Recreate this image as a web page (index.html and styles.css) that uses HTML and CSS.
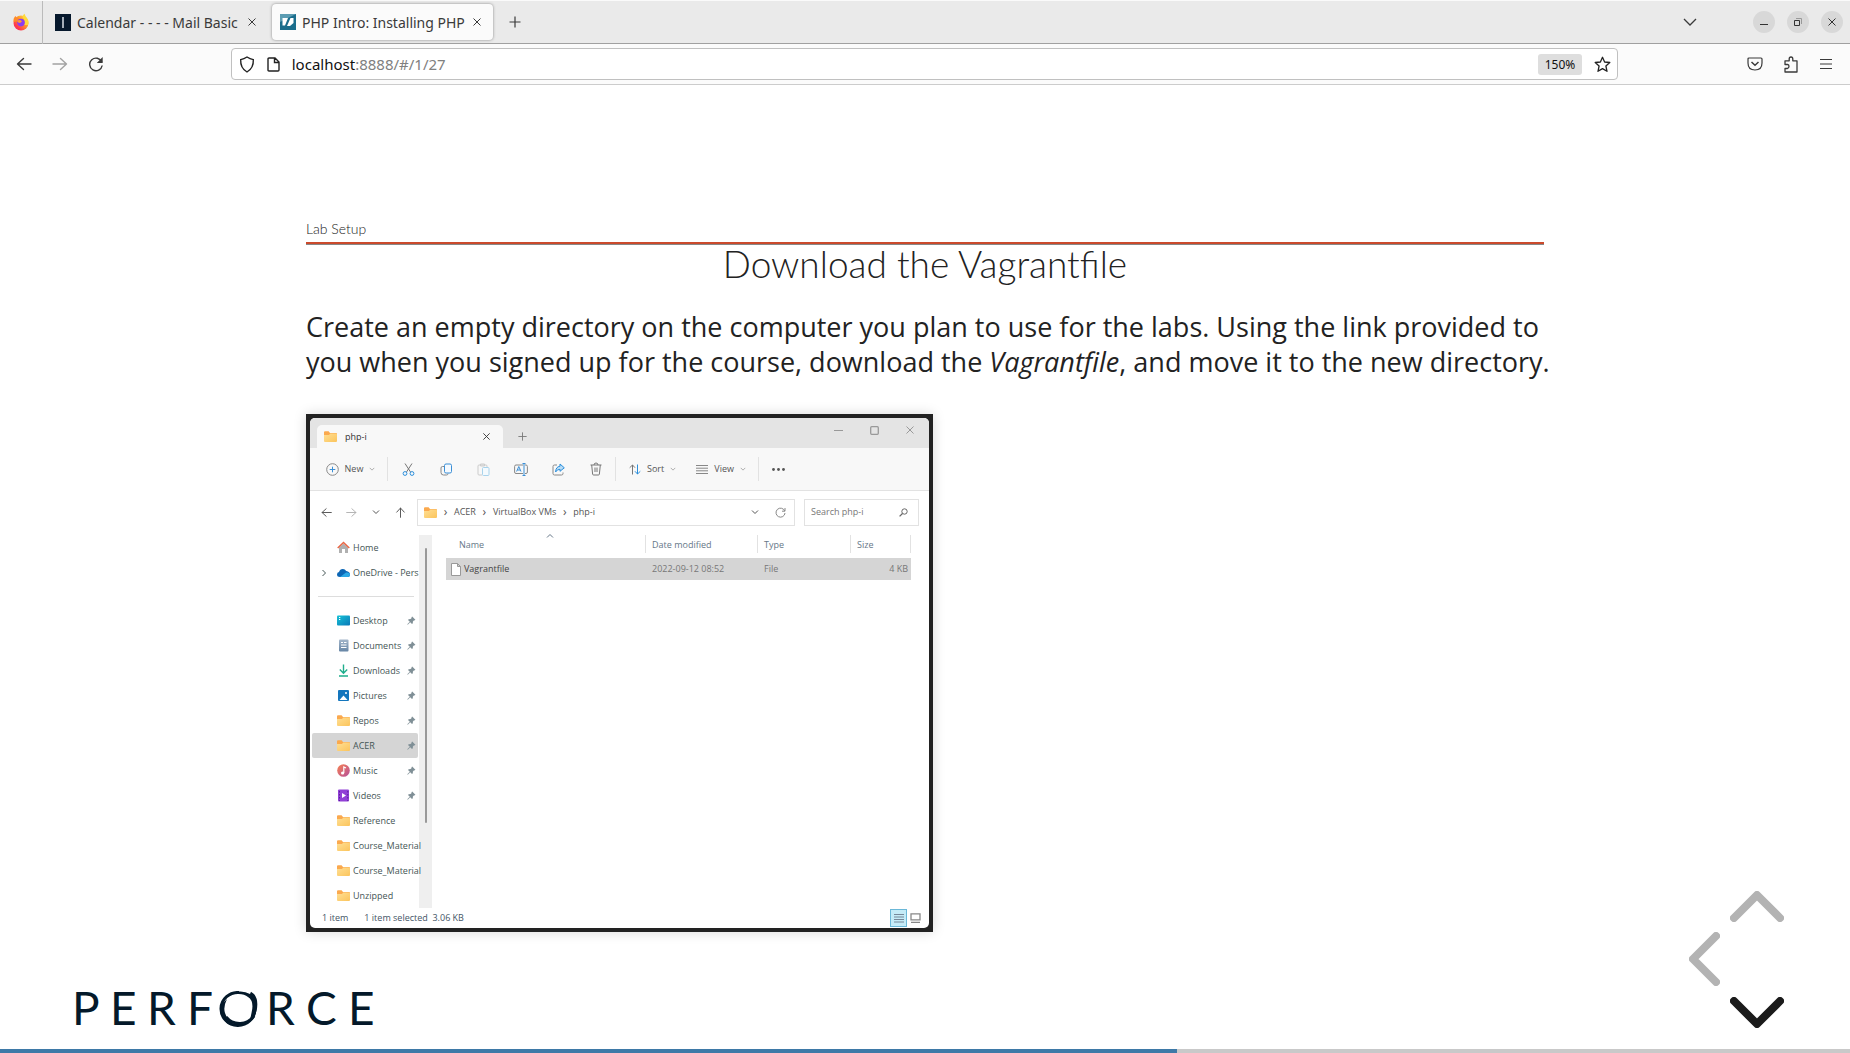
FILE: index.html
```html
<!DOCTYPE html>
<html lang="en">
<head>
<meta charset="utf-8">
<title>PHP Intro: Installing PHP</title>
<link rel="stylesheet" href="styles.css">
</head>
<body>
<svg class="defs" aria-hidden="true">
  <linearGradient id="gold" x1="0" y1="0" x2="1" y2="1"><stop offset="0" stop-color="#ffdf94"/><stop offset="1" stop-color="#fbc45c"/></linearGradient>
  <linearGradient id="cyan" x1="0" y1="0" x2="1" y2="1"><stop offset="0" stop-color="#17c3d6"/><stop offset="1" stop-color="#0a78b8"/></linearGradient>
  <linearGradient id="slate" x1="0" y1="0" x2="0" y2="1"><stop offset="0" stop-color="#a3b6ca"/><stop offset="1" stop-color="#6685a5"/></linearGradient>
  <linearGradient id="tune" x1="0" y1="0" x2="1" y2="1"><stop offset="0" stop-color="#f78151"/><stop offset="1" stop-color="#b54f9c"/></linearGradient>
  <linearGradient id="fox" x1="1" y1="0" x2="0" y2="1"><stop offset="0" stop-color="#fff04a"/><stop offset=".4" stop-color="#ff9a2a"/><stop offset=".75" stop-color="#ff3a4a"/><stop offset="1" stop-color="#f0207a"/></linearGradient>
  <symbol id="folder" viewBox="0 0 13 13"><path d="M0 2.5Q0 1.3 1 1.3H4.6L6 3H12Q13 3 13 4V8H0Z" fill="#fba94e"/><path d="M0 5H5L6.3 3.6H12Q13 3.6 13 4.6V11Q13 12 12 12H1Q0 12 0 11Z" fill="url(#gold)"/></symbol>
  <symbol id="pin" viewBox="0 0 9 9"><path d="M5.2.6 8.4 3.8 7.6 4.5 7.1 4.3 5.9 5.5 5.8 7.3 5 8 3.2 6.2 1 8.6.4 8.7.5 8 2.8 5.8 1 4 1.7 3.2 3.5 3.1 4.7 1.9 4.4 1.3Z" fill="#7f8f96"/></symbol>
  <symbol id="chev" viewBox="0 0 8 8"><path d="M1 2.5 4 5.5 7 2.5" fill="none" stroke="currentColor"/></symbol>
  <symbol id="cross" viewBox="0 0 10 10"><path d="M1.5 1.5 8.5 8.5M8.5 1.5 1.5 8.5" fill="none" stroke="currentColor"/></symbol>
  <symbol id="plus" viewBox="0 0 12 12"><path d="M6 .5V11.5M.5 6H11.5" fill="none" stroke="currentColor" stroke-width="1.2"/></symbol>
  <symbol id="back" viewBox="0 0 16 16"><path d="M15 8H1.5M7.5 2.500 1.5 8 7.5 13.500" fill="none" stroke="currentColor" stroke-width="1.4" stroke-linecap="round" stroke-linejoin="round"/></symbol>
</svg>

<header class="browser">
  <div class="tabs">
    <div class="pinned">
      <svg width="18" height="18" viewBox="0 0 18 18"><circle cx="9" cy="10" r="7.5" fill="url(#fox)"/><path d="M1.5 9Q1 5 3.5 3L5 5 7 5.2 6.5 8Z" fill="#ff8a2a"/><path d="M10.5 4Q11 1.5 12.5.8 13 3 15 5 17.5 8.5 16 12L12 12Q14 8 10.5 4" fill="#ffd93a"/><circle cx="9" cy="9.6" r="3.8" fill="#8a3df0"/><path d="M5 8Q8 6 10 8.5L8 10Q6 10 5 8" fill="#ff9c2e"/></svg>
    </div>
    <div class="tab">
      <svg width="16" height="17" viewBox="0 0 16 17"><path fill="#06182c" d="M0 0H16V17H0Z"/><path d="M8 3V14" stroke="#a4adb8" stroke-width="2"/></svg>
      <span class="tab-name">Calendar - - - - Mail Basic</span>
      <button class="plain" aria-label="Close tab"><svg width="10" height="10"><use href="#cross"/></svg></button>
    </div>
    <div class="tab tab-active">
      <svg width="16" height="16" viewBox="0 0 16 16"><path fill="#1a6d8c" d="M0 0H16V16H0Z"/><path d="M0 0H16L0 8Z" fill="#5b9cb2"/><path d="M2.500 4H8L5 11.500H2.500ZM7 12 10.500 4H13.500V9L10 12Z" fill="#fff"/></svg>
      <span class="tab-name">PHP Intro: Installing PHP</span>
      <button class="plain" aria-label="Close tab"><svg width="10" height="10"><use href="#cross"/></svg></button>
    </div>
    <button class="plain new-tab" aria-label="New tab"><svg width="12" height="12"><use href="#plus"/></svg></button>
    <div class="window-controls">
      <button class="plain list-tabs" aria-label="List all tabs"><svg width="14" height="8" viewBox="0 0 14 8"><path d="M1 1 7 7 13 1" fill="none" stroke="currentColor" stroke-width="1.3"/></svg></button>
      <button class="round" aria-label="Minimize"><svg width="10" height="10" viewBox="0 0 10 10"><path d="M1 7.5H9" stroke="currentColor"/></svg></button>
      <button class="round" aria-label="Restore"><svg width="10" height="10" viewBox="0 0 10 10"><path d="M1.5 3.5H6.5V8.5H1.5Z" fill="none" stroke="currentColor"/><path d="M3 1.5H8.5V7" fill="none" stroke="#999"/></svg></button>
      <button class="round" aria-label="Close"><svg width="10" height="10"><use href="#cross"/></svg></button>
    </div>
  </div>
  <div class="toolbar">
    <div class="history">
      <button class="plain" aria-label="Back"><svg width="16" height="16"><use href="#back"/></svg></button>
      <button class="plain faded flip" aria-label="Forward"><svg width="16" height="16"><use href="#back"/></svg></button>
      <button class="plain" aria-label="Reload"><svg width="16" height="16" viewBox="0 0 16 16"><path d="M13.8 6A6.3 6.3 0 1 0 14.2 9.5" fill="none" stroke="currentColor" stroke-width="1.4"/><path d="M14.7 1V7H8.8Z" fill="currentColor"/></svg></button>
    </div>
    <div class="address">
      <svg width="16" height="17" viewBox="0 0 16 17"><path d="M8 1Q11 3 14.3 3.6 14.8 12 8 16 1.2 12 1.7 3.6 5 3 8 1Z" fill="none" stroke="#222" stroke-width="1.4"/></svg>
      <svg width="13" height="15" viewBox="0 0 13 15"><path d="M1 2Q1 1 2 1H8L12 5V13Q12 14 11 14H2Q1 14 1 13ZM7.5 1V5.5H12" fill="none" stroke="#222" stroke-width="1.4"/></svg>
      <span class="url"><b>localhost</b>:8888/#/1/27</span>
      <button class="zoom">150%</button>
      <button class="plain" aria-label="Bookmark"><svg width="17" height="17" viewBox="0 0 17 17"><path d="M8.5 1.3 10.6 6 15.8 6.5 11.9 10 13 15.3 8.5 12.6 4 15.3 5.1 10 1.2 6.5 6.4 6Z" fill="none" stroke="#222" stroke-width="1.3" stroke-linejoin="round"/></svg></button>
    </div>
    <div class="extras">
      <button class="plain" aria-label="Save to Pocket"><svg width="16" height="16" viewBox="0 0 16 16"><path d="M1 3Q1 2 2 2H14Q15 2 15 3V7Q15 14 8 14 1 14 1 7Z" fill="none" stroke="currentColor" stroke-width="1.2"/><path d="M4.5 6 8 9.3 11.5 6" fill="none" stroke="currentColor" stroke-width="1.5"/></svg></button>
      <button class="plain" aria-label="Extensions"><svg width="16" height="17" viewBox="0 0 16 17"><path d="M2 6.5V4.8H6.2V3Q6.2 1 8 1 9.8 1 9.8 3V4.8H14V16H2V12.5H4.5Q6 12 6 10.3 6 8.7 4.5 8.5H2Z" fill="none" stroke="currentColor" stroke-width="1.3" stroke-linejoin="round"/></svg></button>
      <button class="plain" aria-label="Menu"><svg width="14" height="12" viewBox="0 0 14 12"><path d="M1 1.5H13M1 6H13M1 10.5H13" stroke="currentColor" stroke-width="1.2"/></svg></button>
    </div>
  </div>
</header>

<main class="deck">
  <section class="slide">
    <p class="chapter">Lab Setup</p>
    <h1>Download the Vagrantfile</h1>
    <p class="lead">Create an empty directory on the computer you plan to use for the labs. Using the link provided to you when you signed up for the course, download the <em>Vagrantfile</em>, and move it to the new directory.</p>

    <div class="frame">
      <div class="explorer">
        <div class="ex-title">
          <div class="ex-tab">
            <svg width="13" height="13"><use href="#folder"/></svg>
            <span class="ex-tab-name">php-i</span>
            <button class="plain" aria-label="Close tab"><svg width="9" height="9"><use href="#cross"/></svg></button>
          </div>
          <button class="plain ex-plus" aria-label="New tab"><svg width="9" height="9"><use href="#plus"/></svg></button>
          <div class="ex-window">
            <button class="plain" aria-label="Minimize"><svg width="9" height="9" viewBox="0 0 9 9"><path d="M0 4.5H9" stroke="currentColor"/></svg></button>
            <button class="plain" aria-label="Maximize"><svg width="9" height="9" viewBox="0 0 9 9"><rect x=".7" y=".7" width="7.6" height="7.6" rx="1" fill="none" stroke="currentColor" stroke-width="1.3"/></svg></button>
            <button class="plain" aria-label="Close"><svg width="10" height="10"><use href="#cross"/></svg></button>
          </div>
        </div>

        <div class="ex-commands">
          <button class="plain ex-new"><svg width="13" height="13" viewBox="0 0 13 13"><circle cx="6.5" cy="6.5" r="5.8" fill="none" stroke="#888"/><path d="M6.5 3.7V9.3M3.7 6.5H9.3" stroke="#3b8fd6"/></svg>New<svg class="small" width="6" height="6"><use href="#chev"/></svg></button>
          <div class="ex-icons">
            <button class="plain" aria-label="Cut"><svg width="13" height="13" viewBox="0 0 13 13"><path d="M3 .5 8.5 9M10 .5 4.5 9" stroke="#777" fill="none"/><circle cx="3" cy="10.5" r="1.9" fill="none" stroke="#2b8fdc"/><circle cx="10" cy="10.5" r="1.9" fill="none" stroke="#2b8fdc"/></svg></button>
            <button class="plain" aria-label="Copy"><svg width="13" height="13" viewBox="0 0 13 13"><path d="M4 3.5H2.5Q1 3.5 1 5V9.5Q1 12 3.5 12H6.5Q8 12 8 10.5" fill="none" stroke="#888"/><rect x="4.5" y="1" width="7" height="9" rx="1.5" fill="#f5faff" stroke="#3b8fd6"/></svg></button>
            <button class="plain" aria-label="Paste"><svg width="13" height="13" viewBox="0 0 13 13"><path d="M5 12H2Q1 12 1 11V3Q1 2 2 2H9Q10 2 10 3V4M3.5 1H7.5V3H3.5Z" fill="none" stroke="#ccc"/><rect x="5.5" y="4.5" width="6.5" height="8" rx="1" fill="#f4fafe" stroke="#a8d3ec"/></svg></button>
            <button class="plain" aria-label="Rename"><svg width="14" height="13" viewBox="0 0 14 13"><path d="M9 2H2Q.6 2 .6 3.5V9Q.6 10.5 2 10.5H9M11 2H12Q13.4 2 13.4 3.5V9Q13.4 10.5 12 10.5H11" fill="none" stroke="#888"/><path d="M2.6 8.5 4.8 3.5 7 8.5M3.5 7H6M8.5.5H11.5M10 .5V12.5M8.5 12.5H11.5" fill="none" stroke="#3b8fd6"/></svg></button>
            <button class="plain" aria-label="Share"><svg width="13" height="13" viewBox="0 0 13 13"><path d="M5 2H2.5Q1 2 1 3.5V10.5Q1 12 2.5 12H9.5Q11 12 11 10.5V9.5" fill="none" stroke="#888"/><path d="M8 1 12.3 4.8 8 8.3V6.3Q5 6.3 3.6 9 3.8 3.7 8 3.2Z" fill="#b9dcf5" stroke="#2b8fdc" stroke-linejoin="round"/></svg></button>
            <button class="plain" aria-label="Delete"><svg width="12" height="14" viewBox="0 0 12 14"><path d="M.5 3H11.5M4 3Q4 1 6 1 8 1 8 3M1.7 3 2.6 12Q2.7 13 3.6 13H8.4Q9.3 13 9.4 12L10.3 3M5 5.5V10M7 5.5V10" fill="none" stroke="#777"/></svg></button>
          </div>
          <div class="ex-views">
            <button class="plain"><svg width="12" height="11" viewBox="0 0 12 11"><path d="M3.5 10.5V1M.7 3.7 3.5 1 6 3.7" fill="none" stroke="#777"/><path d="M8.5.5V10M6 7.3 8.5 10 11.3 7.3" fill="none" stroke="#2b8fdc"/></svg>Sort<svg class="small" width="6" height="6"><use href="#chev"/></svg></button>
            <button class="plain"><svg width="12" height="9" viewBox="0 0 12 9"><path d="M0 .5H12M0 3.2H12M0 5.8H12M0 8.5H12" stroke="#888"/></svg>View<svg class="small" width="6" height="6"><use href="#chev"/></svg></button>
          </div>
          <button class="plain ex-more" aria-label="More"><svg width="13" height="3" viewBox="0 0 13 3"><circle cx="1.5" cy="1.5" r="1.4"/><circle cx="6.5" cy="1.5" r="1.4"/><circle cx="11.5" cy="1.5" r="1.4"/></svg></button>
        </div>

        <div class="ex-nav">
          <div class="ex-arrows">
            <button class="plain" aria-label="Back"><svg width="11" height="11"><use href="#back"/></svg></button>
            <button class="plain faded flip" aria-label="Forward"><svg width="11" height="11"><use href="#back"/></svg></button>
            <button class="plain" aria-label="Recent"><svg width="8" height="8"><use href="#chev"/></svg></button>
            <button class="plain up" aria-label="Up"><svg width="11" height="11"><use href="#back"/></svg></button>
          </div>
          <div class="ex-path">
            <svg width="13" height="13"><use href="#folder"/></svg>
            <i>›</i><span>ACER</span><i>›</i><span>VirtualBox VMs</span><i>›</i><span>php-i</span>
            <button class="plain ex-drop" aria-label="Previous locations"><svg width="8" height="8"><use href="#chev"/></svg></button>
            <button class="plain" aria-label="Refresh"><svg width="11" height="11" viewBox="0 0 11 11"><path d="M9.7 4A4.5 4.5 0 1 0 10 6M10 1V4.2H7" fill="none" stroke="#888"/></svg></button>
          </div>
          <label class="ex-search"><input type="text" placeholder="Search php-i" aria-label="Search php-i"><svg width="9" height="9" viewBox="0 0 9 9"><circle cx="5.5" cy="3.5" r="2.7" fill="none" stroke="#666"/><path d="M3.5 5.5.6 8.4" stroke="#666" stroke-width="1.3"/></svg></label>
        </div>

        <div class="ex-body">
          <nav class="ex-side">
            <a href="#home"><svg width="13" height="13" viewBox="0 0 13 13"><path d="M2 6.5 6.5 2.5 11 6.5V12H8V8H5V12H2Z" fill="#b0b0b0"/><path d="M.7 7 6.5 1.5 12.3 7" fill="none" stroke="#ea6644" stroke-width="1.5"/></svg><span>Home</span></a>
            <a href="#onedrive"><svg class="expand" width="8" height="8"><use href="#chev"/></svg><svg width="13" height="13" viewBox="0 0 13 13"><path d="M3 11Q0 11 0 8.5 0 6.3 2 6 3 2.8 6 3 8 3 9.2 5 13 5.5 13 8.5 13 11 10.5 11Z" fill="#0c66b5"/><path d="M3 11 9 6.5Q13 6 13 8.8 13 11 10.5 11Z" fill="#2aa7e6"/></svg><span>OneDrive - Pers</span></a>
            <hr>
            <a href="#desktop"><svg width="13" height="13" viewBox="0 0 13 13"><rect y="1.5" width="13" height="10" rx="1" fill="url(#cyan)"/><path d="M2 3.5H3.3M2 5.5H3.3" stroke="#fff"/></svg><span>Desktop</span><svg class="pin" width="9" height="9"><use href="#pin"/></svg></a>
            <a href="#documents"><svg width="13" height="13" viewBox="0 0 13 13"><rect x="2" y=".5" width="9.5" height="12" rx="1" fill="url(#slate)"/><path d="M4 3.5H6M7 3.5H9.5M4 6H9.5M4 8.5H9.5" stroke="#fff"/></svg><span>Documents</span><svg class="pin" width="9" height="9"><use href="#pin"/></svg></a>
            <a href="#downloads"><svg width="13" height="13" viewBox="0 0 13 13"><path d="M6.5.5V9M2.8 5.5 6.5 9.2 10.2 5.5M2 12H11" fill="none" stroke="#1fae8c" stroke-width="1.4"/></svg><span>Downloads</span><svg class="pin" width="9" height="9"><use href="#pin"/></svg></a>
            <a href="#pictures"><svg width="13" height="13" viewBox="0 0 13 13"><rect x="1" y="1" width="11" height="11" rx="1" fill="#1476bd"/><path d="M2.5 11 6.5 6.5 10.5 11Z" fill="#fff"/><circle cx="9" cy="4" r="1" fill="#fff"/></svg><span>Pictures</span><svg class="pin" width="9" height="9"><use href="#pin"/></svg></a>
            <a href="#repos"><svg width="13" height="13"><use href="#folder"/></svg><span>Repos</span><svg class="pin" width="9" height="9"><use href="#pin"/></svg></a>
            <a href="#acer" class="current"><svg width="13" height="13"><use href="#folder"/></svg><span>ACER</span><svg class="pin" width="9" height="9"><use href="#pin"/></svg></a>
            <a href="#music"><svg width="13" height="13" viewBox="0 0 13 13"><circle cx="6.5" cy="6.5" r="6.3" fill="url(#tune)"/><path d="M6.8 9V3L9 4" fill="none" stroke="#fff" stroke-width="1.2"/><circle cx="5.6" cy="9" r="1.6" fill="#fff"/></svg><span>Music</span><svg class="pin" width="9" height="9"><use href="#pin"/></svg></a>
            <a href="#videos"><svg width="13" height="13" viewBox="0 0 13 13"><rect x="1" y=".5" width="11" height="12" rx="1" fill="#9140d6"/><path d="M5 4 9 6.5 5 9Z" fill="#fff"/><path d="M2.5 2V12M10.8 2V12" stroke="#5c1e9c" stroke-dasharray="1.5 1.5"/></svg><span>Videos</span><svg class="pin" width="9" height="9"><use href="#pin"/></svg></a>
            <a href="#reference"><svg width="13" height="13"><use href="#folder"/></svg><span>Reference</span></a>
            <a href="#materials-1"><svg width="13" height="13"><use href="#folder"/></svg><span>Course_Material</span></a>
            <a href="#materials-2"><svg width="13" height="13"><use href="#folder"/></svg><span>Course_Material</span></a>
            <a href="#unzipped"><svg width="13" height="13"><use href="#folder"/></svg><span>Unzipped</span></a>
          </nav>
          <div class="ex-scroll"><div class="ex-thumb"></div></div>
          <div class="ex-files">
            <table>
              <thead><tr><th class="c-name">Name<svg class="sorted" width="8" height="8"><use href="#chev"/></svg></th><th class="c-date">Date modified</th><th class="c-type">Type</th><th>Size</th></tr></thead>
              <tbody><tr><td class="c-file"><svg width="10" height="13" viewBox="0 0 10 13"><path d="M.5.5H6.5L9.5 3.5V12.5H.5ZM6.5.5V3.5H9.5" fill="#fff" stroke="#999"/></svg>Vagrantfile</td><td>2022-09-12 08:52</td><td>File</td><td class="c-size">4 KB</td></tr></tbody>
            </table>
          </div>
        </div>

        <div class="ex-status">
          <span>1 item</span><span class="ex-selected">1 item selected&nbsp; 3.06 KB</span>
          <button class="plain ex-view ex-view-on" aria-label="Details view"><svg width="10" height="10" viewBox="0 0 10 10"><path d="M0 1.5H10M0 4H10M0 6.5H10M0 9H10" stroke="#789"/></svg></button>
          <button class="plain ex-view" aria-label="Icon view"><svg width="11" height="10" viewBox="0 0 11 10"><path d="M1 .8H10V6.8H1ZM1 9.3H10" fill="none" stroke="#888" stroke-width="1.3"/></svg></button>
        </div>
      </div>
    </div>
  </section>

  <svg class="logo" width="300" height="36" viewBox="0 0 300 36" role="img" aria-label="Perforce">
    <text y="34" x="-3 35 72 112">PERF</text>
    <text y="34" x="191 231 273">RCE</text>
    <path d="M163 1.5A17 16.5 0 1 0 179 18" transform="translate(1)" fill="none" stroke="#04192a" stroke-width="3"/>
    <path d="M163 .5A18 17 0 0 1 174 3L175 .8 178 3Q183 9 180.500 20 178.500 26 174 29L175.500 22Q178.500 10 172 6 168 2.500 161 3ZM151 8Q147 16 149 22 151 28 156 31L154 34 150.500 32Q141.500 22 146 13Z" transform="translate(1)" fill="#04192a"/>
    <path d="M150 26A17 16 0 0 0 178 25" transform="translate(1)" fill="none" stroke="#04192a" stroke-width="3"/>
  </svg>

  <nav class="controls">
    <button class="plain go-up" aria-label="Previous slide"><svg width="54" height="31" viewBox="0 0 54 31"><path d="M4 27 27 4 50 27"/></svg></button>
    <button class="plain go-left" aria-label="Previous section"><svg width="31" height="54" viewBox="0 0 31 54"><path d="M27 4 4 27 27 50"/></svg></button>
    <button class="plain go-down" aria-label="Next slide"><svg width="54" height="31" viewBox="0 0 54 31"><path d="M4 4 27 27 50 4"/></svg></button>
  </nav>
</main>
<div class="progress"><div class="progress-bar" style="width:63.6%"></div></div>
</body>
</html>
```
FILE: styles.css
```css
* { box-sizing: border-box; }
body { margin: 0; min-height: 100vh; display: flex; flex-direction: column; background: #fff; color: #222; font-family: "Open Sans", "Noto Sans", sans-serif; }
svg { display: block; flex: none; }
.defs { position: absolute; width: 0; height: 0; }
.plain { display: flex; align-items: center; justify-content: center; padding: 0; border: 0; background: none; color: inherit; font: inherit; }
.faded { opacity: .45; }
.flip svg { transform: rotate(180deg); }
.up svg { transform: rotate(90deg); }

/* Browser chrome */
.browser { font-family: "Noto Sans", sans-serif; color: #3a3a3a; }
.tabs { display: flex; align-items: center; height: 44px; background: #eaeaea; border-top: 1px solid #fafafa; border-bottom: 1px solid #a0a0a0; }
.pinned { display: flex; align-items: center; justify-content: center; width: 43px; height: 43px; border-right: 1px solid #bbb; }
.tab { display: flex; align-items: center; gap: 6px; width: 221px; height: 36px; padding: 0 11px 0 8px; margin-left: 4px; border-radius: 4px; font-size: 14px; white-space: nowrap; }
.tab-name { flex: 1; }
.tab-active { background: #fbfbfb; box-shadow: 0 0 3px #888; }
.new-tab { width: 43px; height: 36px; }
.window-controls { display: flex; align-items: center; gap: 12px; margin-left: auto; padding-right: 7px; }
.list-tabs { margin-right: 44px; }
.round { display: flex; align-items: center; justify-content: center; width: 22px; height: 22px; padding: 0; border: 0; border-radius: 50%; background: #d8d8d8; color: #333; }
.toolbar { display: flex; align-items: center; justify-content: space-between; height: 41px; background: #fbfbfb; border-bottom: 1px solid #ccc; }
.history { display: flex; flex: 1; gap: 20px; padding-left: 16px; }
.address { display: flex; align-items: center; gap: 12px; width: 75%; height: 32px; padding: 0 6px 0 7px; border: 1px solid #c0c0c0; border-radius: 4px; background: #fff; font-size: 15px; }
.url { flex: 1; color: #808080; }
.url b { font-weight: 400; color: #111; }
.zoom { height: 21px; padding: 0 7px; border: 0; border-radius: 3px; background: #dedede; color: #111; font: 12px "Noto Sans", sans-serif; }
.extras { display: flex; flex: 1; justify-content: flex-end; align-items: center; gap: 20px; padding-right: 17px; }

/* Slide */
.deck { position: relative; flex: 1; padding-top: 134px; }
.slide { width: 67%; max-width: 1238px; margin: 0 auto; }
.chapter { margin: 0; height: 23px; font: 300 14px/20px Lato, sans-serif; }
h1 { margin: 0; border-top: 2px solid #cb4a2c; box-shadow: inset 0 1px #888; text-align: center; font: 300 37px/40px Lato, sans-serif; color: #222; }
.lead { margin: 25px -12px 35px 0; font-size: 27px; line-height: 35px; }
.frame { max-width: 627px; padding: 4px; background: #222; box-shadow: 0 0 12px rgba(0, 0, 0, .15); }
.logo { position: absolute; left: 75px; bottom: 22px; }
.logo text { font: 46px Lato, sans-serif; fill: #04192a; }
.controls { position: absolute; right: 66px; bottom: 21px; width: 95px; height: 137px; }
.controls button { position: absolute; }
.controls path { fill: none; stroke: #b3b3b3; stroke-width: 8px; stroke-linecap: round; stroke-linejoin: round; }
.go-up { right: 0; top: 0; }
.go-left { left: 0; top: 41px; }
.go-down { right: 0; bottom: 0; }
.controls .go-down path { stroke: #1b1b1b; }
.progress { height: 4px; background: #c9c9c9; }
.progress-bar { height: 4px; background: #3e79a7; }

/* File manager window */
.explorer { border-radius: 5px; overflow: hidden; background: #fff; color: #555; font-size: 9px; line-height: 12px; }
.ex-title { display: flex; align-items: flex-end; height: 30px; padding-left: 7px; background: #e4e4e4; }
.ex-tab { display: flex; align-items: center; gap: 8px; width: 186px; height: 23px; padding: 0 12px 0 7px; border-radius: 5px 5px 0 0; background: #f8f8f8; color: #333; }
.ex-tab-name { flex: 1; }
.ex-plus { width: 39px; height: 23px; color: #777; }
.ex-window { display: flex; align-self: flex-start; align-items: center; margin-left: auto; padding-right: 1px; color: #999; }
.ex-window button { width: 36px; height: 24px; }
.ex-commands { display: flex; align-items: center; height: 43px; background: #f8f8f8; border-bottom: 1px solid #e2e2e2; }
.ex-new { width: 78px; height: 24px; gap: 6px; padding-left: 4px; border-right: 1px solid #e2e2e2; }
.small { opacity: .6; }
.ex-icons { display: flex; width: 228px; height: 24px; padding-left: 2px; border-right: 1px solid #e2e2e2; }
.ex-icons button { flex: 1; }
.ex-views { display: flex; justify-content: space-between; width: 143px; height: 24px; padding: 0 12px 0 13px; border-right: 1px solid #e2e2e2; }
.ex-views button { gap: 6px; }
.ex-more { width: 39px; height: 24px; fill: #555; }
.ex-nav { display: flex; align-items: center; height: 42px; }
.ex-arrows { display: flex; width: 107px; padding: 0 4px; }
.ex-arrows button { flex: 1; }
.ex-path { display: flex; flex: 1; align-items: center; height: 27px; padding: 0 8px 0 6px; margin-right: 9px; border: 1px solid #e2e2e2; white-space: nowrap; }
.ex-path i { width: 17px; text-align: center; font-style: normal; font-size: 12px; }
.ex-drop { margin: 0 16px 0 auto; }
.ex-search { display: flex; align-items: center; width: 115px; height: 27px; padding: 0 10px 0 6px; margin-right: 10px; border: 1px solid #e2e2e2; }
.ex-search input { flex: 1; min-width: 0; padding: 0; border: 0; background: none; font: inherit; }
.ex-search input::placeholder { color: #777; }
.ex-body { display: flex; padding-top: 2px; }
.ex-side { width: 109px; padding-right: 1px; }
.ex-side a { position: relative; display: flex; align-items: center; gap: 3px; height: 25px; margin-left: 2px; padding: 0 2px 0 25px; color: #455; text-decoration: none; white-space: nowrap; }
.ex-side a span { flex: 1; min-width: 0; }
.ex-side .current { background: #d5d5d5; border-radius: 2px; }
.ex-side hr { height: 1px; margin: 11px 4px 11px 8px; border: 0; background: #ddd; }
.expand { position: absolute; left: 8px; transform: rotate(-90deg); }
.ex-scroll { width: 13px; padding: 13px 0 0 6px; background: #efefef; }
.ex-thumb { width: 2px; height: 275px; background: #999; border-radius: 1px; }
.ex-files { flex: 1; padding: 0 18px 0 14px; }
.ex-files table { width: 100%; border-collapse: collapse; table-layout: fixed; }
.ex-files th { position: relative; height: 23px; padding: 0 0 3px 6px; text-align: left; font-weight: 400; color: #678; background: linear-gradient(#e2e2e2, #e2e2e2) right top / 1px 18px no-repeat; }
.ex-files td { height: 22px; padding: 0 0 0 6px; background: #d5d5d5; color: #777; }
.ex-files .c-name { width: 200px; padding-left: 13px; }
.c-date { width: 112px; }
.c-type { width: 93px; }
.ex-files .c-file { display: flex; align-items: center; gap: 3px; padding-left: 5px; color: #444; }
.ex-files .c-size { padding-right: 3px; text-align: right; }
.sorted { position: absolute; left: 100px; top: -3px; transform: rotate(180deg); }
.ex-status { display: flex; align-items: center; height: 20px; padding: 0 5px 0 12px; color: #456; }
.ex-selected { flex: 1; padding-left: 16px; }
.ex-view { width: 17px; height: 18px; }
.ex-view-on { background: #c5ebf7; border: 1px solid #6bb8d8; }
```
